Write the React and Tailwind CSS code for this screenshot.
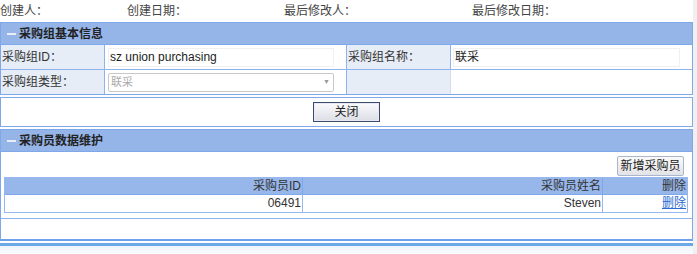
import React from 'react'

const font = { fontFamily: '"Liberation Sans", "Noto Sans CJK SC", sans-serif' }

function PanelHeader({ title }) {
  return (
    <div className="h-[22px] bg-[#95b5e9] border-b border-[#7fa8ea] flex items-center pl-[6px] text-[12px] font-bold text-[#222]">
      <span className="inline-block w-[9px] h-[2px] bg-[#e8eef8] mr-[3px]" />
      {title}
    </div>
  )
}

export default function App() {
  return (
    <div className="w-[697px] h-[254px] bg-white text-[12px] text-[#333] relative overflow-hidden" style={font}>
      <div className="w-[693px]">
        {/* meta row */}
        <div className="h-[22px] flex items-center text-[#444]">
          <div className="w-[127px]">创建人：</div>
          <div className="w-[157px]">创建日期：</div>
          <div className="w-[188px]">最后修改人：</div>
          <div>最后修改日期：</div>
        </div>

        {/* 采购组基本信息 */}
        <div className="border border-[#7fa8ea]">
          <PanelHeader title="采购组基本信息" />
          <div className="grid grid-cols-[104px_242px_104px_1fr]">
            <div className="h-[25px] bg-[#e7edf7] border-r border-b border-[#8fb3ee] flex items-center pl-[1px]">采购组ID：</div>
            <div className="h-[25px] border-r border-b border-[#8fb3ee] flex items-center pl-[3px] pr-[12px]">
              <div className="w-full h-[19px] border border-[#f0f0f0] flex items-center pl-[1px] text-[#222]">sz union purchasing</div>
            </div>
            <div className="h-[25px] bg-[#e7edf7] border-r border-b border-[#8fb3ee] flex items-center pl-[1px]">采购组名称：</div>
            <div className="h-[25px] border-b border-[#8fb3ee] flex items-center pl-[2px] pr-[12px]">
              <div className="w-full h-[19px] border border-[#f0f0f0] flex items-center pl-[1px] text-[#222]">联采</div>
            </div>
            <div className="h-[24px] bg-[#e7edf7] border-r border-[#8fb3ee] flex items-center pl-[1px]">采购组类型：</div>
            <div className="h-[24px] border-r border-[#8fb3ee] flex items-center pl-[3px] pr-[12px]">
              <div className="w-full h-[19px] border border-[#c8c8c8] rounded-[2px] flex items-center justify-between pl-[2px] pr-[3px] text-[#aaa] text-[11px]">
                联采
                <span className="text-[7px] text-[#999]">▼</span>
              </div>
            </div>
            <div className="h-[24px] bg-[#e7edf7] border-r border-[#cfdcf2]" />
            <div className="h-[24px]" />
          </div>
        </div>

        {/* 按钮 */}
        <div className="mt-[2px] h-[30px] border border-[#7fa8ea] flex items-center justify-center">
          <button className="w-[67px] h-[20px] border border-[#3b4a6b] bg-gradient-to-b from-[#fbfbfd] to-[#dcdde6] text-[12px] text-[#222] shadow-[inset_0_0_0_1px_#e8ebf3]">
            关闭
          </button>
        </div>

        {/* 采购员数据维护 */}
        <div className="mt-[2px] border border-[#7fa8ea] border-b-2 border-b-[#6fa0ea]">
          <PanelHeader title="采购员数据维护" />
          <div className="px-[3px] pt-[4px]">
            <div className="flex justify-end pr-[5px] mb-[1px]">
              <button className="w-[67px] h-[20px] border border-[#a9b6cc] rounded-[2px] bg-gradient-to-b from-[#fafafa] to-[#e2e3e8] text-[12px] text-[#222]">
                新增采购员
              </button>
            </div>
            <div className="border border-[#97b8ef] mr-[1px] text-right">
              <div className="grid grid-cols-[298px_300px_1fr] h-[17px] bg-[#97b7ea] border-b border-[#7fa8ea]">
                <div className="border-r border-[#7fa8ea] leading-[16px] pr-[1px]">采购员ID</div>
                <div className="border-r border-[#7fa8ea] leading-[16px] pr-[1px]">采购员姓名</div>
                <div className="leading-[16px] pr-[1px]">删除</div>
              </div>
              <div className="grid grid-cols-[298px_300px_1fr] h-[17px]">
                <div className="border-r border-[#97b8ef] leading-[17px] pr-[1px]">06491</div>
                <div className="border-r border-[#97b8ef] leading-[17px] pr-[1px]">Steven</div>
                <div className="leading-[17px] pr-[1px] text-[#2a6bd1] underline">删除</div>
              </div>
            </div>
          </div>
          <div className="mt-[5px] h-[21px] border-t border-[#8fb3ee]" />
        </div>
        <div className="mt-[2px] h-[3px] bg-[#6aa9e6]" />
      </div>
      <div className="h-[12px] bg-gradient-to-b from-[#eef4fb] to-white" />
      <div className="absolute right-0 top-0 w-[4px] h-full bg-[#f0f0f0]" />
    </div>
  )
}
